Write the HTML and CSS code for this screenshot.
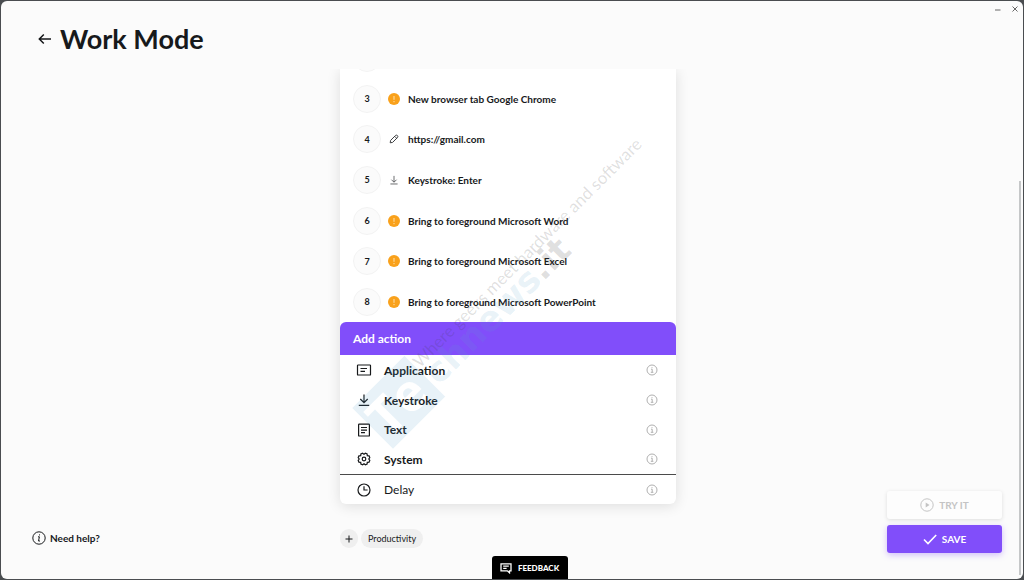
FILE: index.html
```html
<!DOCTYPE html>
<html lang="en">
<head>
<meta charset="utf-8">
<title>Work Mode</title>
<link rel="stylesheet" href="styles.css">
</head>
<body>
<svg class="sprite" aria-hidden="true">
  <symbol id="info" viewBox="0 0 12 12"><circle cx="6" cy="6" r="5"/><path d="M5 5.2h1.2v3M4.8 8.3h2.6M6 3.2v.9"/></symbol>
  <symbol id="warn" viewBox="0 0 12 12"><circle cx="6" cy="6" r="6" fill="#f9a11b" stroke="none"/><path d="M6 3v3.8M6 8v1.2" stroke="#fde0b0"/></symbol>
  <symbol id="down" viewBox="0 0 14 14"><path d="M7 1.500v8.200M3.600 6.600 7 10l3.400-3.400M2.200 12.300h9.600"/></symbol>
</svg>
<div class="window">
  <header class="header">
    <button class="back" aria-label="Back"><svg viewBox="0 0 14 12"><path d="M13 6H1.500M5.800 1.500 1.300 6 5.800 10.500"/></svg></button>
    <h1 class="title">Work Mode</h1>
    <div class="controls">
      <button class="control" aria-label="Minimize"><svg viewBox="0 0 8 8"><path d="M1 5h5.500"/></svg></button>
      <button class="control" aria-label="Close"><svg viewBox="0 0 8 8"><path d="M1.500 1.500l5 5M6.500 1.500l-5 5"/></svg></button>
    </div>
  </header>
  <main class="main">
    <div class="side">
      <a class="help" href="#help"><svg viewBox="0 0 14 14"><circle cx="7" cy="7" r="6.200"/><path d="M6 5.800h1.400L6.500 10H8M7.500 3.400v1"/></svg>Need help?</a>
    </div>
    <div class="center">
      <section class="card">
        <div class="viewport">
          <ol class="steps">
            <li class="step"><span class="num"></span></li>
            <li class="step"><span class="num">3</span><svg class="mark"><use href="#warn"/></svg>New browser tab Google Chrome</li>
            <li class="step"><span class="num">4</span><svg class="mark thin" viewBox="0 0 12 12"><path d="M2.200 9.800 2.600 7.400 7.600 2.400C8.800 1.400 10.600 3.200 9.600 4.400L4.600 9.400ZM6.800 3.400 8.600 5.200"/></svg>https://gmail.com</li>
            <li class="step"><span class="num">5</span><svg class="mark thin" viewBox="-1 -1 16 16"><use href="#down" width="14" height="14"/></svg>Keystroke: Enter</li>
            <li class="step"><span class="num">6</span><svg class="mark"><use href="#warn"/></svg>Bring to foreground Microsoft Word</li>
            <li class="step"><span class="num">7</span><svg class="mark"><use href="#warn"/></svg>Bring to foreground Microsoft Excel</li>
            <li class="step"><span class="num">8</span><svg class="mark"><use href="#warn"/></svg>Bring to foreground Microsoft PowerPoint</li>
          </ol>
        </div>
        <h2 class="add">Add action</h2>
        <ul class="actions">
          <li class="action"><button class="choice"><svg viewBox="0 0 16 16"><rect x="1.500" y="3" width="13" height="10" rx=".6"/><path d="M4.500 6.500h6.500M4.500 9.300h4.500"/></svg>Application</button><button class="info" aria-label="About Application"><svg><use href="#info"/></svg></button></li>
          <li class="action"><button class="choice"><svg viewBox="0 0 16 16"><path d="M8 2.500v8.200M4.300 7 8 10.700 11.700 7M2.800 13.300h10.400"/></svg>Keystroke</button><button class="info" aria-label="About Keystroke"><svg><use href="#info"/></svg></button></li>
          <li class="action"><button class="choice"><svg viewBox="0 0 16 16"><rect x="2.600" y="2.200" width="10.800" height="11.800" rx=".6"/><path d="M5 5.500h6M5 8.100h6M5 10.700h4"/></svg>Text</button><button class="info" aria-label="About Text"><svg><use href="#info"/></svg></button></li>
          <li class="action"><button class="choice"><svg viewBox="0 0 16 16"><path d="M6.600 2.200 8 3.200 9.400 2.200 11.100 2.900 11.300 4.700 13.100 4.900 13.800 6.600 12.800 8 13.800 9.400 13.100 11.100 11.300 11.300 11.100 13.100 9.400 13.800 8 12.800 6.600 13.800 4.900 13.100 4.700 11.300 2.900 11.100 2.200 9.400 3.200 8 2.200 6.600 2.900 4.900 4.700 4.700 4.900 2.900Z"/><circle cx="8" cy="8" r="1.800"/></svg>System</button><button class="info" aria-label="About System"><svg><use href="#info"/></svg></button></li>
          <li class="action delay"><button class="choice"><svg viewBox="0 0 16 16"><circle cx="8" cy="8" r="6"/><path d="M8 4.200V8h3.600"/></svg>Delay</button><button class="info" aria-label="About Delay"><svg><use href="#info"/></svg></button></li>
        </ul>
      </section>
      <div class="tags">
        <button class="plus" aria-label="Add tag"><svg viewBox="0 0 10 10"><path d="M5 1.500v7M1.500 5h7"/></svg></button>
        <button class="tag">Productivity</button>
      </div>
    </div>
    <div class="side right">
      <button class="button try" disabled><svg viewBox="0 0 14 14"><circle cx="7" cy="7" r="6.200"/><path d="M5.700 4.600 9.500 7 5.700 9.400Z" fill="currentColor" stroke="none"/></svg>TRY IT</button>
      <button class="button save"><svg viewBox="0 0 14 14"><path d="M1 7.500 5 11.500 13.200 3"/></svg>SAVE</button>
    </div>
  </main>
  <button class="feedback"><svg viewBox="0 0 12 12"><path d="M1 1.800h10v7H9.500v2L7.300 8.800H1ZM3.200 4.200h5.600M3.200 6.300h3.400"/></svg>FEEDBACK</button>
  <div class="scroll"></div>
</div>
<svg class="watermark" viewBox="0 0 1024 580" aria-hidden="true">
  <defs><mask id="letters"><rect width="76" height="58" fill="#fff"/><text class="initials" x="4" y="48" fill="#000">Te</text></mask></defs>
  <g transform="translate(352 408) rotate(-45)">
    <rect class="blue" width="74" height="58" mask="url(#letters)"/>
    <text class="brand blue" x="77" y="46">chnews<tspan class="gray">.it</tspan></text>
    <text class="tagline gray" x="76" y="20">Where geeks meet hardware and software</text>
  </g>
</svg>
</body>
</html>
```
FILE: styles.css
```css
* { box-sizing: border-box; }
body {
  margin: 0;
  height: 100vh;
  padding: 1px;
  background: #4a4d50;
  color: #17191b;
  font-family: Lato, "Open Sans", sans-serif;
  font-size: 10px;
  font-weight: 700;
}
button {
  font: inherit;
  color: inherit;
  background: none;
  border: 0;
  padding: 0;
}
svg { fill: none; stroke: currentColor; }
.sprite { position: absolute; width: 0; height: 0; }
.window {
  position: relative;
  height: 100%;
  display: flex;
  flex-direction: column;
  background: #fbfbfb;
  border-radius: 6px;
  overflow: hidden;
}
.header {
  display: flex;
  align-items: center;
  gap: 8px;
  height: 68px;
  padding: 8px 4px 0 37px;
}
.back { display: flex; }
.back svg { width: 14px; height: 12px; stroke-width: 1.5; }
.title { margin: 0; font-size: 27px; line-height: 32px; }
.controls {
  display: flex;
  gap: 9px;
  align-self: flex-start;
  margin-left: auto;
  color: #666;
}
.control { display: flex; }
.control svg { width: 8px; height: 8px; margin-top: -4px; }
.main {
  flex: 1;
  min-height: 0;
  display: grid;
  grid-template-columns: 1fr 336px 1fr;
  padding-right: 8px;
  overflow: hidden;
}
.side {
  display: flex;
  flex-direction: column;
  align-items: flex-start;
  justify-content: flex-end;
  padding: 0 13px 26px 31px;
}
.help {
  display: flex;
  align-items: center;
  gap: 4px;
  margin-bottom: 8px;
  color: inherit;
  text-decoration: none;
}
.help svg { width: 14px; height: 14px; }
.right { align-items: flex-end; gap: 6px; }
.center { display: flex; flex-direction: column; min-height: 0; }
.card {
  flex: 1;
  min-height: 0;
  display: flex;
  flex-direction: column;
  background: #fff;
  border-radius: 0 0 6px 6px;
  box-shadow: 0 2px 14px rgba(0, 0, 0, .12);
}
.viewport { flex: 1; min-height: 0; overflow: hidden; display: flex; }
.steps {
  flex: 1;
  display: grid;
  grid-auto-rows: 1fr;
  margin: -31px 0 0;
  padding: 0 13px;
  list-style: none;
}
.step { display: flex; align-items: center; }
.num {
  display: flex;
  align-items: center;
  justify-content: center;
  width: 28px;
  height: 28px;
  margin-right: 7px;
  font-size: 9px;
  background: #fbfbfb;
  border: 1px solid #f3f3f3;
  border-radius: 50%;
}
.mark { width: 12px; height: 12px; margin-right: 8px; }
.thin { stroke-width: 1; color: #3c3e40; }
.add {
  margin: 0;
  padding: 0 13px;
  font-size: 12px;
  line-height: 33px;
  color: #fff;
  background: #814efa;
  border-radius: 6px 6px 0 0;
}
.actions {
  display: grid;
  grid-template-rows: 30px 30px 29px 30px 30px;
  margin: 0;
  padding: 0;
  list-style: none;
}
.action {
  display: flex;
  align-items: center;
  padding: 0 18px 0 16px;
  font-size: 12px;
}
.delay { border-top: 1px solid #4b4b4b; font-weight: 400; }
.choice {
  flex: 1;
  display: flex;
  align-items: center;
  gap: 12px;
}
.choice svg { width: 16px; height: 16px; stroke-width: 1.2; }
.info { display: flex; color: #b0b0b0; }
.info svg { width: 12px; height: 12px; }
.tags {
  display: flex;
  align-items: flex-start;
  gap: 3px;
  height: 75px;
  padding-top: 25px;
  font-size: 9px;
  font-weight: 400;
}
.plus, .tag { height: 19px; background: #efefef; border-radius: 10px; }
.plus { display: grid; place-items: center; width: 18px; }
.plus svg { width: 10px; height: 10px; }
.tag { padding: 0 7px; }
.button {
  display: flex;
  align-items: center;
  justify-content: center;
  gap: 5px;
  width: 115px;
  height: 28px;
  border-radius: 3px;
}
.button svg { width: 14px; height: 14px; }
.try { color: #c4c4c4; background: #fdfdfd; box-shadow: 0 1px 4px rgba(0, 0, 0, .12); }
.save { color: #fff; background: #814efa; box-shadow: 0 2px 6px rgba(129, 78, 250, .35); }
.save svg { stroke-width: 1.6; }
.feedback {
  position: absolute;
  left: 48%;
  bottom: 0;
  display: flex;
  align-items: center;
  justify-content: center;
  gap: 6px;
  width: 76px;
  height: 23px;
  font-size: 8px;
  font-weight: 900;
  color: #fff;
  background: #000;
  border-radius: 3px 3px 0 0;
}
.feedback svg { width: 12px; height: 12px; stroke-width: 1.3; }
.scroll {
  position: absolute;
  top: 180px;
  right: 2px;
  bottom: 4px;
  width: 2px;
  background: #c5c7c8;
}
.watermark {
  position: absolute;
  top: 0;
  left: 0;
  width: 100%;
  height: 100%;
  stroke: none;
  pointer-events: none;
}
.brand { font: 700 35px "DejaVu Sans", sans-serif; }
.initials { font: 700 52px "Open Sans", sans-serif; }
.tagline { font: 400 17px Lato, sans-serif; }
.blue { fill: rgba(90, 165, 205, .14); }
.gray { fill: rgba(60, 60, 60, .16); }
```
